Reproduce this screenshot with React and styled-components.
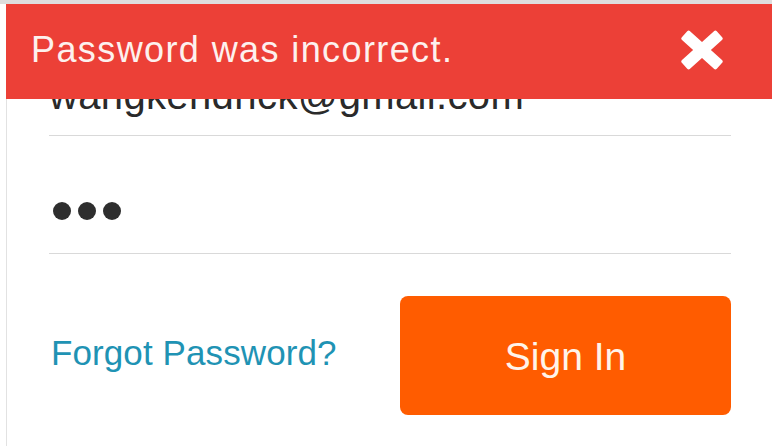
import styled, { createGlobalStyle } from "styled-components";

const GlobalStyle = createGlobalStyle`
  html, body {
    margin: 0;
    padding: 0;
    background: #ffffff;
  }
  body {
    font-family: "Liberation Sans", Arial, Helvetica, sans-serif;
  }
`;

const Screen = styled.div`
  position: relative;
  width: 772px;
  height: 446px;
  overflow: hidden;
  box-sizing: border-box;
  border-top: 4px solid #dedede;
  background: #ffffff;
`;

const Card = styled.div`
  margin-left: 6px;
  height: 100%;
  box-sizing: border-box;
  border-left: 1px solid #e2e2e2;
  padding: 15px 41px 0 42px;
`;

const Field = styled.div`
  height: ${(p) => p.$height}px;
  display: flex;
  align-items: flex-end;
  box-sizing: border-box;
  padding-bottom: ${(p) => p.$pad}px;
  border-bottom: 1px solid #d9d9d9;
`;

const EmailText = styled.span`
  font-size: 40px;
  line-height: 1;
  color: #2a2a2a;
  letter-spacing: 0.35px;
`;

const Dots = styled.div`
  display: flex;
  gap: 7px;
  margin-left: 4px;
`;

const Dot = styled.span`
  width: 18px;
  height: 18px;
  border-radius: 50%;
  background: #2e2e2e;
`;

const Actions = styled.div`
  margin-top: 42px;
  display: flex;
  align-items: center;
  justify-content: space-between;
`;

const ForgotLink = styled.a`
  font-size: 35px;
  line-height: 1;
  letter-spacing: 0.1px;
  color: #1f93b4;
  text-decoration: none;
  margin-left: 2px;
  margin-bottom: 7px;
  cursor: pointer;
`;

const SignInButton = styled.button`
  width: 331px;
  height: 119px;
  border: none;
  border-radius: 8px;
  background: #ff5c00;
  color: #fff4ea;
  font-family: "Liberation Sans", Arial, Helvetica, sans-serif;
  font-size: 39px;
  line-height: 1;
  padding: 2px 0 0;
  cursor: pointer;
`;

const ErrorBanner = styled.div`
  position: absolute;
  top: 0;
  left: 6px;
  right: 0;
  height: 95px;
  display: flex;
  align-items: center;
  justify-content: space-between;
  box-sizing: border-box;
  padding: 0 49px 4px 25px;
  background: #ec4037;
`;

const ErrorText = styled.span`
  font-size: 36px;
  line-height: 1;
  letter-spacing: 1.4px;
  color: #fdf1ee;
`;

const CloseButton = styled.button`
  display: flex;
  padding: 0;
  margin-top: 1px;
  border: none;
  background: none;
  cursor: pointer;
`;

function CloseIcon() {
  return (
    <svg width="42" height="40" viewBox="0 0 42 40">
      <g fill="#ffffff" transform="translate(21 20)">
        <rect x="-23.5" y="-6" width="47" height="12" rx="2" transform="rotate(42)" />
        <rect x="-23.5" y="-6" width="47" height="12" rx="2" transform="rotate(-42)" />
      </g>
    </svg>
  );
}

export default function App() {
  return (
    <>
      <GlobalStyle />
      <Screen>
        <Card>
          <Field $height={117} $pad={20}>
            <EmailText>wangkendrick@gmail.com</EmailText>
          </Field>
          <Field $height={118} $pad={33}>
            <Dots>
              <Dot />
              <Dot />
              <Dot />
            </Dots>
          </Field>
          <Actions>
            <ForgotLink>Forgot Password?</ForgotLink>
            <SignInButton>Sign In</SignInButton>
          </Actions>
        </Card>
        <ErrorBanner>
          <ErrorText>Password was incorrect.</ErrorText>
          <CloseButton aria-label="Close">
            <CloseIcon />
          </CloseButton>
        </ErrorBanner>
      </Screen>
    </>
  );
}
